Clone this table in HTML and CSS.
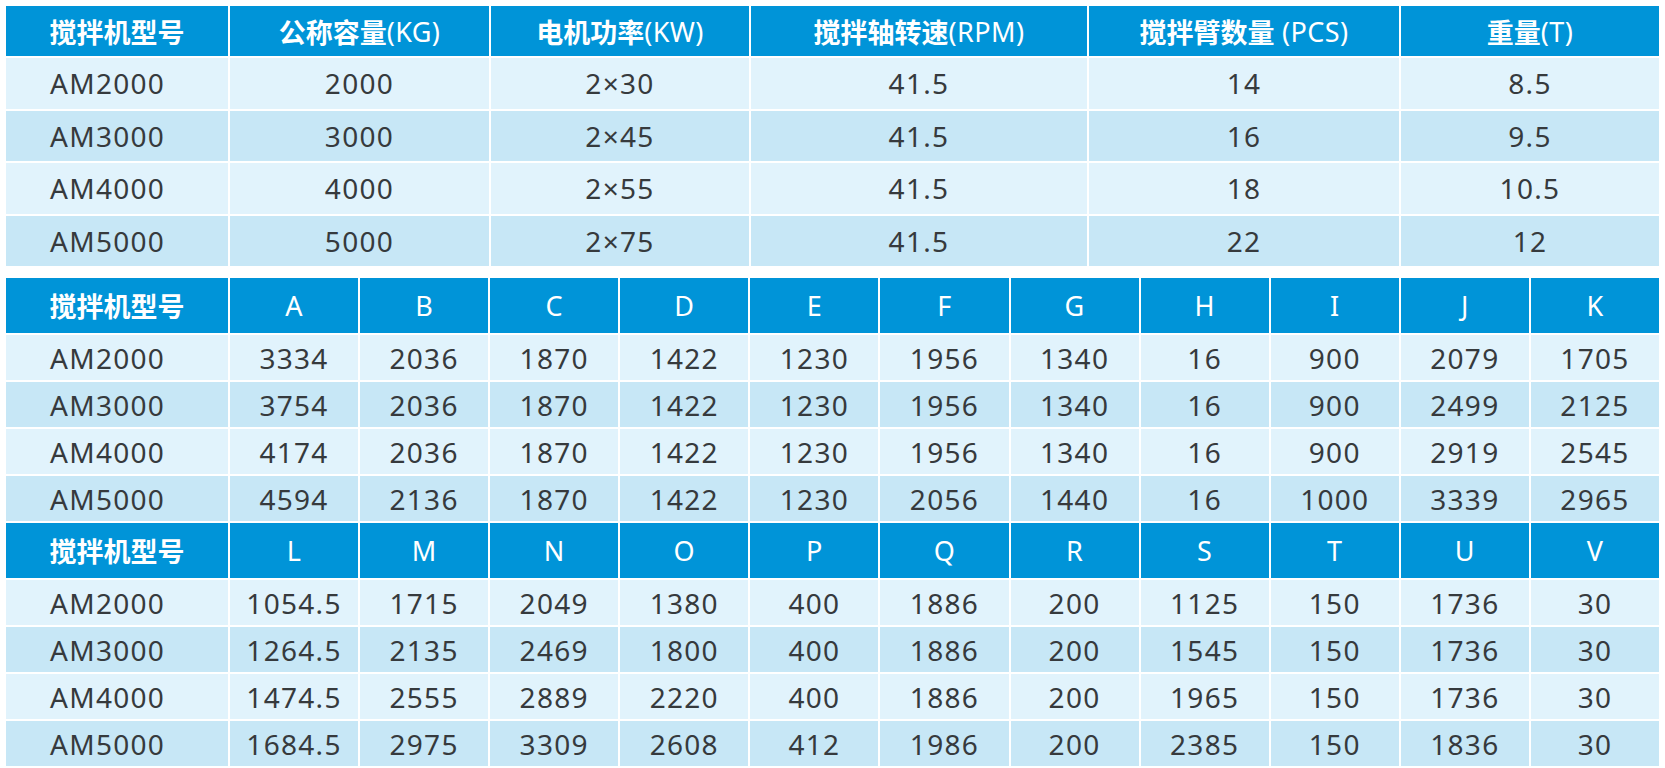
FILE: index.html
```html
<!DOCTYPE html>
<html lang="zh-CN">
<head>
<meta charset="utf-8">
<title>搅拌机参数</title>
<link rel="stylesheet" href="styles.css">
</head>
<body>
<div class="page">
  <section class="sec sec-main">
    <div class="row head">
      <div class="cell first"><b>搅拌机型号</b></div>
      <div class="cell"><b>公称容量</b><span class="lat">(KG)</span></div>
      <div class="cell"><b>电机功率</b><span class="lat">(KW)</span></div>
      <div class="cell"><b>搅拌轴转速</b><span class="lat">(RPM)</span></div>
      <div class="cell"><b>搅拌臂数量</b><span class="lat">&nbsp;(PCS)</span></div>
      <div class="cell"><b>重量</b><span class="lat">(T)</span></div>
    </div>
    <div class="row odd">
      <div class="cell first">AM2000</div><div class="cell">2000</div><div class="cell">2×30</div><div class="cell">41.5</div><div class="cell">14</div><div class="cell">8.5</div>
    </div>
    <div class="row even">
      <div class="cell first">AM3000</div><div class="cell">3000</div><div class="cell">2×45</div><div class="cell">41.5</div><div class="cell">16</div><div class="cell">9.5</div>
    </div>
    <div class="row odd">
      <div class="cell first">AM4000</div><div class="cell">4000</div><div class="cell">2×55</div><div class="cell">41.5</div><div class="cell">18</div><div class="cell">10.5</div>
    </div>
    <div class="row even">
      <div class="cell first">AM5000</div><div class="cell">5000</div><div class="cell">2×75</div><div class="cell">41.5</div><div class="cell">22</div><div class="cell">12</div>
    </div>
  </section>

  <section class="sec sec-dims">
    <div class="row head">
      <div class="cell first"><b>搅拌机型号</b></div>
      <div class="cell">A</div><div class="cell">B</div><div class="cell">C</div><div class="cell">D</div><div class="cell">E</div><div class="cell">F</div><div class="cell">G</div><div class="cell">H</div><div class="cell">I</div><div class="cell">J</div><div class="cell">K</div>
    </div>
    <div class="row odd">
      <div class="cell first">AM2000</div><div class="cell">3334</div><div class="cell">2036</div><div class="cell">1870</div><div class="cell">1422</div><div class="cell">1230</div><div class="cell">1956</div><div class="cell">1340</div><div class="cell">16</div><div class="cell">900</div><div class="cell">2079</div><div class="cell">1705</div>
    </div>
    <div class="row even">
      <div class="cell first">AM3000</div><div class="cell">3754</div><div class="cell">2036</div><div class="cell">1870</div><div class="cell">1422</div><div class="cell">1230</div><div class="cell">1956</div><div class="cell">1340</div><div class="cell">16</div><div class="cell">900</div><div class="cell">2499</div><div class="cell">2125</div>
    </div>
    <div class="row odd">
      <div class="cell first">AM4000</div><div class="cell">4174</div><div class="cell">2036</div><div class="cell">1870</div><div class="cell">1422</div><div class="cell">1230</div><div class="cell">1956</div><div class="cell">1340</div><div class="cell">16</div><div class="cell">900</div><div class="cell">2919</div><div class="cell">2545</div>
    </div>
    <div class="row even">
      <div class="cell first">AM5000</div><div class="cell">4594</div><div class="cell">2136</div><div class="cell">1870</div><div class="cell">1422</div><div class="cell">1230</div><div class="cell">2056</div><div class="cell">1440</div><div class="cell">16</div><div class="cell">1000</div><div class="cell">3339</div><div class="cell">2965</div>
    </div>
  </section>

  <section class="sec sec-dims sec-last">
    <div class="row head">
      <div class="cell first"><b>搅拌机型号</b></div>
      <div class="cell">L</div><div class="cell">M</div><div class="cell">N</div><div class="cell">O</div><div class="cell">P</div><div class="cell">Q</div><div class="cell">R</div><div class="cell">S</div><div class="cell">T</div><div class="cell">U</div><div class="cell">V</div>
    </div>
    <div class="row odd">
      <div class="cell first">AM2000</div><div class="cell">1054.5</div><div class="cell">1715</div><div class="cell">2049</div><div class="cell">1380</div><div class="cell">400</div><div class="cell">1886</div><div class="cell">200</div><div class="cell">1125</div><div class="cell">150</div><div class="cell">1736</div><div class="cell">30</div>
    </div>
    <div class="row even">
      <div class="cell first">AM3000</div><div class="cell">1264.5</div><div class="cell">2135</div><div class="cell">2469</div><div class="cell">1800</div><div class="cell">400</div><div class="cell">1886</div><div class="cell">200</div><div class="cell">1545</div><div class="cell">150</div><div class="cell">1736</div><div class="cell">30</div>
    </div>
    <div class="row odd">
      <div class="cell first">AM4000</div><div class="cell">1474.5</div><div class="cell">2555</div><div class="cell">2889</div><div class="cell">2220</div><div class="cell">400</div><div class="cell">1886</div><div class="cell">200</div><div class="cell">1965</div><div class="cell">150</div><div class="cell">1736</div><div class="cell">30</div>
    </div>
    <div class="row even">
      <div class="cell first">AM5000</div><div class="cell">1684.5</div><div class="cell">2975</div><div class="cell">3309</div><div class="cell">2608</div><div class="cell">412</div><div class="cell">1986</div><div class="cell">200</div><div class="cell">2385</div><div class="cell">150</div><div class="cell">1836</div><div class="cell">30</div>
    </div>
  </section>
</div>
</body>
</html>
```

FILE: styles.css
```css
* { box-sizing: border-box; }

html, body {
  margin: 0;
  padding: 0;
  background: #ffffff;
}

body {
  font-family: "Noto Sans", "Noto Sans CJK SC", sans-serif;
  color: #363a3d;
}

.page {
  width: 1665px;
  padding: 6px 6px 0 6px;
  display: flex;
  flex-direction: column;
}

.sec {
  width: 1653px;
  display: flex;
  flex-direction: column;
  gap: 2px;
}

.sec-dims {
  margin-top: 12px;
}

.sec-last {
  margin-top: 2px;
}

.row {
  display: grid;
  gap: 2px;
}

.sec-main .row {
  grid-template-columns: 222px 259px 258px 336px 310px 1fr;
  height: 50.5px;
}

.sec-main .row.head {
  height: 50px;
}

.sec-dims .row {
  grid-template-columns: 222px repeat(11, 1fr);
  height: 45px;
}

.sec-dims .row.head {
  height: 55px;
}

.cell {
  display: flex;
  align-items: center;
  justify-content: center;
  font-size: 28px;
  letter-spacing: 1.3px;
  white-space: nowrap;
}

.cell.first {
  justify-content: flex-start;
  padding-left: 44px;
}

.head .cell {
  background: #0094d8;
  color: #ffffff;
  font-size: 27px;
  letter-spacing: 0.4px;
}

.head .cell.first {
  justify-content: center;
  padding-left: 0;
}

.head b {
  font-family: "Noto Sans CJK SC", sans-serif;
  font-weight: 700;
  letter-spacing: 0;
}

.head .lat {
  font-weight: 400;
  font-size: 27px;
}

.odd .cell {
  background: #e1f3fc;
}

.even .cell {
  background: #c7e7f6;
}
```
